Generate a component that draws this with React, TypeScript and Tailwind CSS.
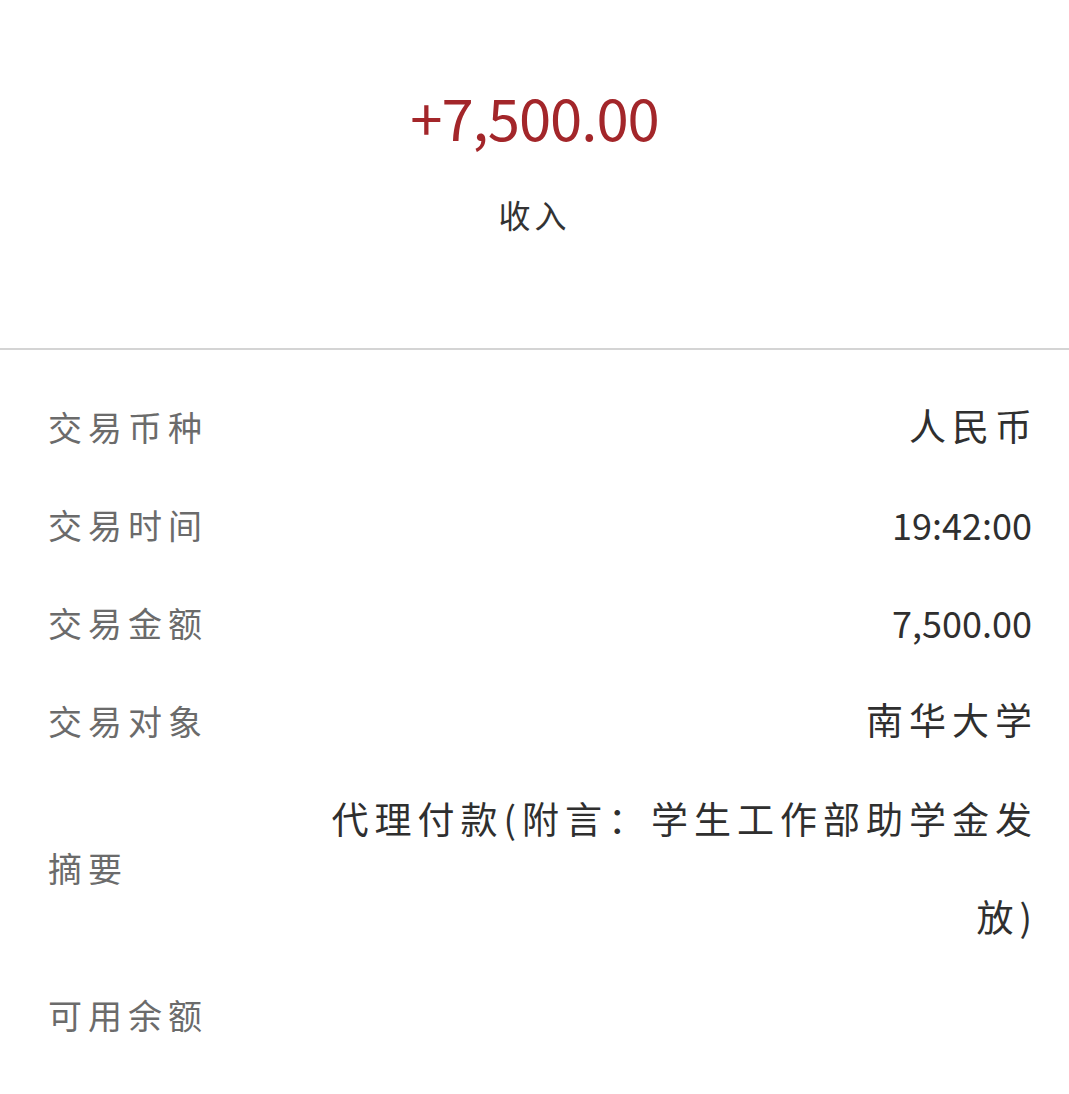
import React from 'react';

const font = { fontFamily: '"Noto Sans CJK SC", "Noto Sans", sans-serif' };

export default function App() {
  const rows = [
    { label: '交易币种', value: '人民币', numeric: false },
    { label: '交易时间', value: '19:42:00', numeric: true },
    { label: '交易金额', value: '7,500.00', numeric: true },
    { label: '交易对象', value: '南华大学', numeric: false },
  ];

  return (
    <main className="w-full min-h-screen bg-white" style={font}>
      {/* Amount header */}
      <section className="flex flex-col items-center h-[350px] pt-[74px] border-b-2 border-[#d4d4d4]">
        <div className="text-[58px] leading-[84px] tracking-[-1px] text-[#a3262a]">+7,500.00</div>
        <div className="mt-[36px] text-[32px] leading-[40px] tracking-[4px] text-[#333333]">收入</div>
      </section>

      {/* Detail rows */}
      <section className="pt-[27px] pl-[48px] pr-[31px]">
        {rows.map((row) => (
          <div key={row.label} className="flex items-center justify-between h-[98px]">
            <span className="text-[34px] tracking-[6px] text-[#6b6b6b]">{row.label}</span>
            {row.numeric ? (
              <span className="pr-[6px] text-[36px] tracking-[0px] text-[#2f2f2f]">{row.value}</span>
            ) : (
              <span className="text-[37px] tracking-[6px] text-[#2f2f2f]">{row.value}</span>
            )}
          </div>
        ))}

        <div className="flex items-center justify-between">
          <span className="shrink-0 text-[34px] tracking-[6px] text-[#6b6b6b]">摘要</span>
          <span className="max-w-[725px] text-right text-[37px] leading-[98px] tracking-[6px] text-[#2f2f2f]">
            代理付款(附言：学生工作部助学金发放)
          </span>
        </div>

        <div className="flex items-center h-[98px]">
          <span className="text-[34px] tracking-[6px] text-[#6b6b6b]">可用余额</span>
        </div>
      </section>
    </main>
  );
}
